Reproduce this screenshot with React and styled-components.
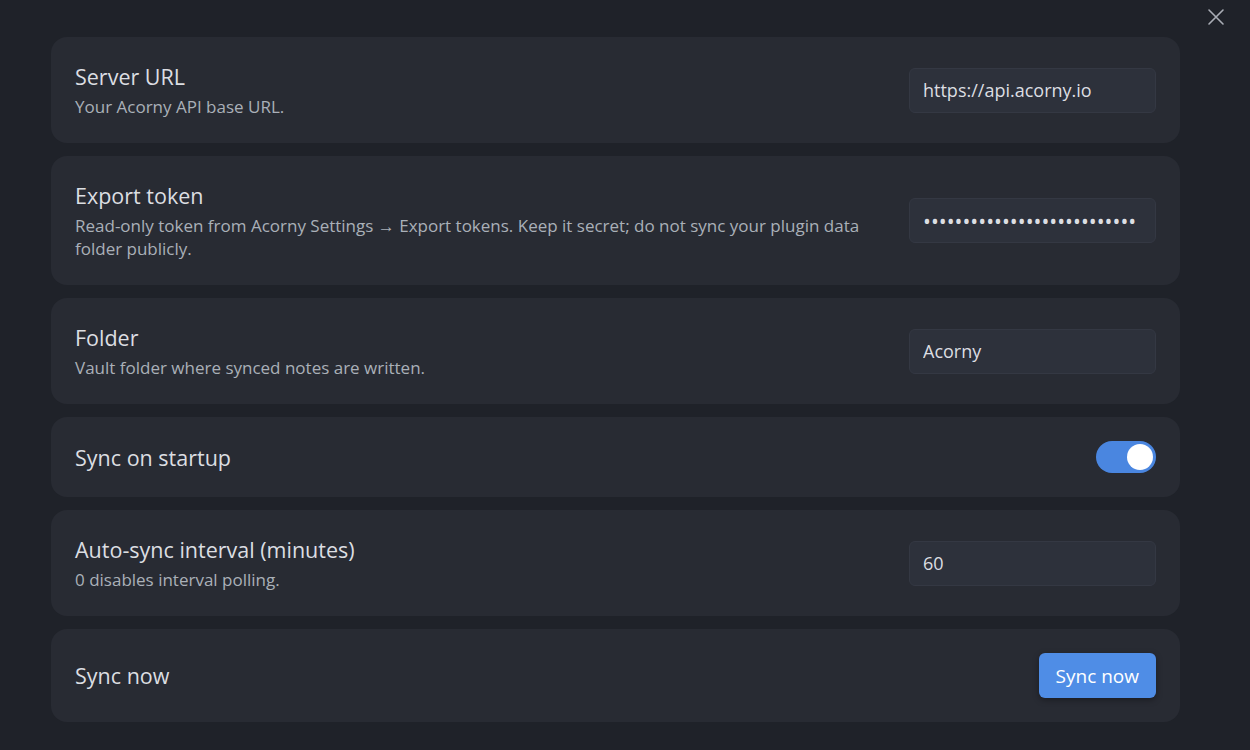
import styled, { createGlobalStyle } from "styled-components";

const GlobalStyle = createGlobalStyle`
  html, body {
    margin: 0;
    padding: 0;
    background: #1f2229;
    font-family: "Open Sans", "Noto Sans", sans-serif;
  }
`;

function App() {
  const settings = [
    {
      name: "Server URL",
      desc: "Your Acorny API base URL.",
      control: <Input defaultValue="https://api.acorny.io" />,
    },
    {
      name: "Export token",
      desc: "Read-only token from Acorny Settings → Export tokens. Keep it secret; do not sync your plugin data folder publicly.",
      control: <Input secret type="password" defaultValue="abcdefghijklmnopqrstuvwxyz0" />,
    },
    {
      name: "Folder",
      desc: "Vault folder where synced notes are written.",
      control: <Input defaultValue="Acorny" />,
    },
    {
      name: "Sync on startup",
      compact: true,
      control: (
        <Toggle on>
          <Knob />
        </Toggle>
      ),
    },
    {
      name: "Auto-sync interval (minutes)",
      desc: "0 disables interval polling.",
      control: <Input defaultValue="60" />,
    },
    {
      name: "Sync now",
      compact: true,
      control: <Button>Sync now</Button>,
    },
  ];

  return (
    <Page>
      <GlobalStyle />
      <TopBar>
        <Close aria-label="Close">
          <svg width="18" height="18" viewBox="0 0 18 18" fill="none">
            <path d="M2 2L16 16M16 2L2 16" stroke="#a9adb5" strokeWidth="1.6" strokeLinecap="round" />
          </svg>
        </Close>
      </TopBar>
      <List>
        {settings.map((s, i) => (
          <Card key={i} compact={s.compact}>
            <Info>
              <Name>{s.name}</Name>
              {s.desc && <Desc>{s.desc}</Desc>}
            </Info>
            {s.control}
          </Card>
        ))}
      </List>
    </Page>
  );
}

const Page = styled.div`
  width: 1250px;
  height: 750px;
  box-sizing: border-box;
  padding: 0 70px 0 51px;
  overflow: hidden;
`;

const TopBar = styled.div`
  height: 37px;
  display: flex;
  justify-content: flex-end;
  margin-right: -45px;
`;

const Close = styled.button`
  background: none;
  border: none;
  padding: 0;
  margin-top: 8px;
  width: 18px;
  height: 18px;
  cursor: pointer;
`;

const List = styled.div`
  display: flex;
  flex-direction: column;
  gap: 13px;
`;

const Card = styled.div`
  background: #282b33;
  border-radius: 16px;
  display: flex;
  align-items: center;
  justify-content: space-between;
  padding: ${(p) => (p.compact ? "24px" : "25px 24px")};
  min-height: 32px;
  gap: 40px;
`;

const Info = styled.div`
  flex: 1;
  max-width: 810px;
`;

const Name = styled.div`
  color: #dcdee2;
  font-size: 21.5px;
  line-height: 29px;
`;

const Desc = styled.div`
  color: #aab0b8;
  font-size: 17px;
  line-height: 23px;
  margin-top: 4px;
`;

const Input = styled.input`
  width: 247px;
  height: 45px;
  box-sizing: border-box;
  background: #2d313b;
  border: 1px solid #343843;
  border-radius: 6px;
  color: #dcdee2;
  font-family: inherit;
  font-size: ${(p) => (p.secret ? "21px" : "18px")};
  padding: 0 13px;
  flex-shrink: 0;
  outline: none;
`;

const Toggle = styled.div`
  width: 60px;
  height: 32px;
  border-radius: 16px;
  background: ${(p) => (p.on ? "#4a86e0" : "#3a3e48")};
  display: flex;
  align-items: center;
  justify-content: ${(p) => (p.on ? "flex-end" : "flex-start")};
  padding: 0 3px;
  box-sizing: border-box;
  flex-shrink: 0;
`;

const Knob = styled.div`
  width: 26px;
  height: 26px;
  border-radius: 50%;
  background: #ffffff;
`;

const Button = styled.button`
  background: #4f8de6;
  color: #ffffff;
  border: none;
  border-radius: 6px;
  height: 45px;
  padding: 0 17px;
  font-family: inherit;
  font-size: 19px;
  box-shadow: 0 2px 6px rgba(0, 0, 0, 0.35);
  flex-shrink: 0;
  cursor: pointer;
`;

export default App;
